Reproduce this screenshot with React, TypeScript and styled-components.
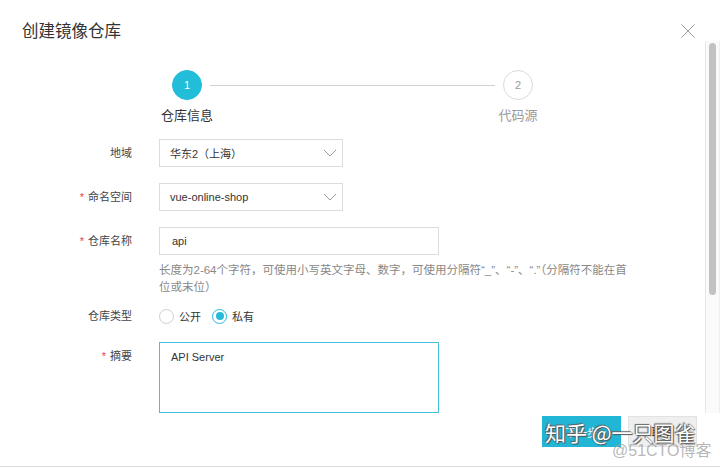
import React from "react";
import styled, { createGlobalStyle } from "styled-components";

const Global = createGlobalStyle`
  html, body { margin: 0; padding: 0; background: #fff; overflow: hidden; }
  body { font-family: "Liberation Sans", "Noto Sans CJK SC", sans-serif; color: #333; }
  * { box-sizing: border-box; }
`;

const Dialog = styled.div`
  position: relative;
  width: 720px;
  height: 467px;
  border-bottom: 1px solid #dcdcdc;
  display: flex;
  flex-direction: column;
  background: #fff;
`;

const Header = styled.div`
  height: 41px;
  flex: none;
  display: flex;
  align-items: flex-end;
  justify-content: space-between;
  padding: 0 25px 0 22px;
`;

const Title = styled.h1`
  margin: 0;
  font-size: 16.5px;
  line-height: 20px;
  font-weight: normal;
  color: #333;
`;

const Close = styled.button`
  border: 0;
  padding: 0;
  background: none;
  width: 14px;
  height: 14px;
  margin-bottom: 3px;
  display: flex;
  cursor: pointer;
`;

const Body = styled.div`
  flex: 1;
  min-height: 0;
  display: flex;
`;

const Scroller = styled.div`
  flex: 1;
  min-width: 0;
  overflow: hidden;
`;

const ScrollTrack = styled.div`
  flex: none;
  width: 15px;
  background: #fafafa;
  border-left: 1px solid #e6e6e6;
  border-right: 1px solid #efefef;
  padding: 2px 3px 0 3px;
`;

const ScrollThumb = styled.div<{ $h: number }>`
  width: 7px;
  height: ${(p) => p.$h}px;
  border-radius: 4px;
  background: #c2c2c2;
`;

const Content = styled.div`
  padding: 29px 0 178px;
`;

const Steps = styled.div`
  width: 411px;
  margin: 0 auto;
  display: grid;
  grid-template-columns: 80px 1fr 80px;
`;

const Step = styled.div`
  display: flex;
  flex-direction: column;
  align-items: center;
`;

const Circle = styled.div<{ $active?: boolean }>`
  width: 30px;
  height: 30px;
  border-radius: 50%;
  display: flex;
  align-items: center;
  justify-content: center;
  font-size: 11px;
  background: ${(p) => (p.$active ? "#22bdd9" : "#fff")};
  border: 1px solid ${(p) => (p.$active ? "#22bdd9" : "#dadada")};
  color: ${(p) => (p.$active ? "#fff" : "#999")};
`;

const StepLabel = styled.div<{ $active?: boolean }>`
  margin-top: 7px;
  font-size: 13px;
  line-height: 18px;
  color: ${(p) => (p.$active ? "#333" : "#999")};
  white-space: nowrap;
`;

const Connector = styled.div`
  height: 1px;
  background: #d0d0d0;
  margin: 15px -17px 0 -17px;
`;

const Form = styled.div`
  margin-top: 14px;
  display: flex;
  flex-direction: column;
`;

const Row = styled.div<{ $mt?: number }>`
  display: grid;
  grid-template-columns: 132px 1fr;
  column-gap: 27px;
  align-items: start;
  margin-top: ${(p) => p.$mt ?? 16}px;
`;

const Label = styled.div<{ $h?: number }>`
  text-align: right;
  font-size: 11px;
  line-height: ${(p) => p.$h ?? 28}px;
  color: #444;
`;

const Star = styled.span`
  color: #e0483e;
  margin-right: 4px;
`;

const Select = styled.div`
  width: 184px;
  height: 28px;
  border: 1px solid #dcdcdc;
  display: flex;
  align-items: center;
  justify-content: space-between;
  padding: 0 5px 0 10px;
  font-size: 11px;
  color: #333;
`;

const Input = styled.div`
  width: 280px;
  height: 28px;
  border: 1px solid #dcdcdc;
  display: flex;
  align-items: center;
  padding: 0 12px;
  font-size: 11px;
  color: #333;
`;

const Help = styled.div`
  margin-top: 7px;
  max-width: 472px;
  font-size: 11.5px;
  line-height: 17px;
  color: #888;
`;

const RadioGroup = styled.div`
  display: flex;
  align-items: center;
  height: 20px;
  gap: 11px;
`;

const RadioItem = styled.label`
  display: flex;
  align-items: center;
  gap: 5px;
  font-size: 11px;
  color: #333;
`;

const RadioDot = styled.span<{ $checked?: boolean }>`
  width: 15px;
  height: 15px;
  border-radius: 50%;
  border: 1px solid ${(p) => (p.$checked ? "#29bad8" : "#cfcfcf")};
  display: flex;
  align-items: center;
  justify-content: center;
  &::after {
    content: "";
    width: 8px;
    height: 8px;
    border-radius: 50%;
    background: ${(p) => (p.$checked ? "#29bad8" : "transparent")};
  }
`;

const TextArea = styled.div`
  width: 280px;
  height: 71px;
  border: 1px solid #45c0dc;
  padding: 7px 11px;
  font-size: 11px;
  line-height: 14px;
  color: #333;
`;

const Footer = styled.div`
  flex: none;
  height: 53px;
  display: flex;
  justify-content: flex-end;
  align-items: flex-start;
  gap: 7px;
  padding: 3px 23px 0 0;
`;

const Button = styled.button<{ $primary?: boolean }>`
  height: 31px;
  width: ${(p) => (p.$primary ? 79 : 69)}px;
  border: 1px solid ${(p) => (p.$primary ? "#22b6d6" : "#e2e2e2")};
  background: ${(p) => (p.$primary ? "#22b6d6" : "#efefef")};
  color: ${(p) => (p.$primary ? "#fff" : "#333")};
  font-family: inherit;
  font-size: 11px;
  padding: 0;
  cursor: pointer;
`;

const Watermark = styled.div`
  position: absolute;
  left: 545px;
  top: 418px;
  font-family: "Noto Sans CJK SC", sans-serif;
  font-size: 21px;
  line-height: 28px;
  color: #fff;
  white-space: nowrap;
  text-shadow: 0 0 1px #444, 1px 1px 1px #555, -1px -1px 1px #666;
  pointer-events: none;
`;

const Watermark2 = styled.div`
  position: absolute;
  left: 612px;
  top: 441px;
  font-family: "Liberation Sans", "Noto Sans CJK SC", sans-serif;
  font-size: 16px;
  line-height: 20px;
  color: rgba(160, 160, 160, 0.75);
  white-space: nowrap;
  pointer-events: none;
`;

const Chevron = () => (
  <svg width="14" height="8" viewBox="0 0 14 8" fill="none">
    <path d="M1 1 L7 7 L13 1" stroke="#999" strokeWidth="1" />
  </svg>
);

export default function App() {
  return (
    <>
      <Global />
      <Dialog>
        <Header>
          <Title>创建镜像仓库</Title>
          <Close aria-label="close">
            <svg width="14" height="14" viewBox="0 0 14 14">
              <path d="M0.5 0.5 L13.5 13.5 M13.5 0.5 L0.5 13.5" stroke="#9a9a9a" strokeWidth="1" />
            </svg>
          </Close>
        </Header>
        <Body>
          <Scroller>
            <Content>
              <Steps>
                <Step>
                  <Circle $active>1</Circle>
                  <StepLabel $active>仓库信息</StepLabel>
                </Step>
                <Connector />
                <Step>
                  <Circle>2</Circle>
                  <StepLabel>代码源</StepLabel>
                </Step>
              </Steps>
              <Form>
                <Row $mt={0}>
                  <Label>地域</Label>
                  <Select>
                    <span>华东2（上海）</span>
                    <Chevron />
                  </Select>
                </Row>
                <Row>
                  <Label>
                    <Star>*</Star>命名空间
                  </Label>
                  <Select>
                    <span>vue-online-shop</span>
                    <Chevron />
                  </Select>
                </Row>
                <Row>
                  <Label>
                    <Star>*</Star>仓库名称
                  </Label>
                  <div>
                    <Input>api</Input>
                    <Help>
                      长度为2-64个字符，可使用小写英文字母、数字，可使用分隔符“_”、“-”、“.”（分隔符不能在首位或末位）
                    </Help>
                  </div>
                </Row>
                <Row $mt={10}>
                  <Label $h={20}>仓库类型</Label>
                  <RadioGroup>
                    <RadioItem>
                      <RadioDot />
                      公开
                    </RadioItem>
                    <RadioItem>
                      <RadioDot $checked />
                      私有
                    </RadioItem>
                  </RadioGroup>
                </Row>
                <Row>
                  <Label>
                    <Star>*</Star>摘要
                  </Label>
                  <TextArea>API Server</TextArea>
                </Row>
              </Form>
            </Content>
          </Scroller>
          <ScrollTrack>
            <ScrollThumb $h={252} />
          </ScrollTrack>
        </Body>
        <Footer>
          <Button $primary>下一步</Button>
          <Button>取消</Button>
        </Footer>
        <Watermark>知乎 @一只图雀</Watermark>
        <Watermark2>@51CTO博客</Watermark2>
      </Dialog>
    </>
  );
}
